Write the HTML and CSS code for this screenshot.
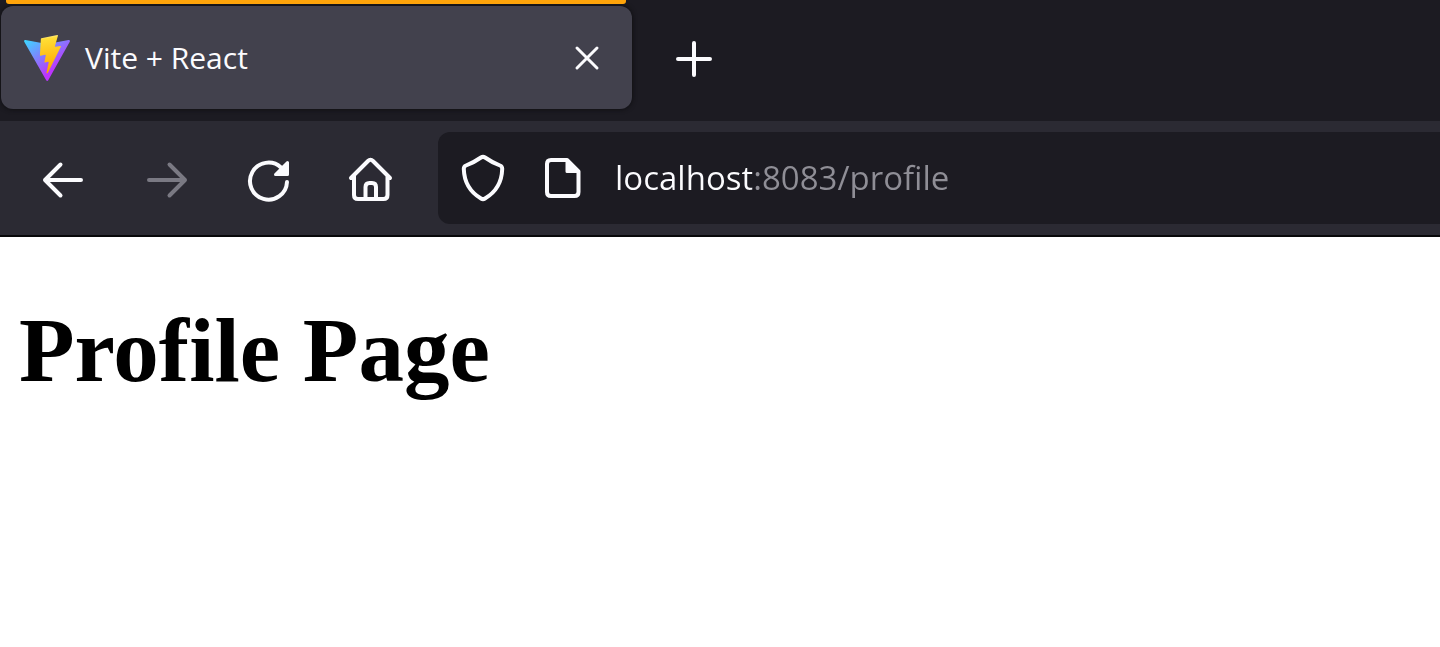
FILE: index.html
```html
<!DOCTYPE html>
<html lang="en">
<head>
<meta charset="utf-8">
<meta name="viewport" content="width=device-width, initial-scale=1">
<title>Vite + React</title>
<link rel="stylesheet" href="styles.css">
</head>
<body>
<header class="browser">
  <div class="tab-strip">
    <div class="tab">
      <svg class="favicon" viewBox="0 0 256 257" aria-hidden="true">
        <defs>
          <linearGradient id="shell" x1="-.828%" x2="57.636%" y1="7.652%" y2="78.411%"><stop offset="0" stop-color="#41d1ff"/><stop offset="1" stop-color="#bd34fe"/></linearGradient>
          <linearGradient id="bolt" x1="43.376%" x2="50.316%" y1="2.242%" y2="89.03%"><stop offset="0" stop-color="#ffea83"/><stop offset=".083" stop-color="#ffdd35"/><stop offset="1" stop-color="#ffa800"/></linearGradient>
        </defs>
        <path fill="url(#shell)" d="M255.153 37.938L134.897 252.976c-2.483 4.44-8.862 4.466-11.382.048L.875 37.958c-2.746-4.814 1.371-10.646 6.827-9.67l120.385 21.517a6.537 6.537 0 0 0 2.322-.004l117.867-21.483c5.438-.991 9.574 4.796 6.877 9.62Z"/>
        <path fill="url(#bolt)" d="M185.432.063L96.44 17.501a3.268 3.268 0 0 0-2.634 3.014l-5.474 92.456a3.268 3.268 0 0 0 3.997 3.378l24.777-5.718c2.318-.535 4.413 1.507 3.936 3.838l-7.361 36.047c-.495 2.426 1.782 4.5 4.151 3.78l15.304-4.649c2.372-.72 4.652 1.36 4.15 3.788l-11.698 56.621c-.732 3.542 3.979 5.473 5.943 2.437l1.313-2.028l72.516-144.72c1.215-2.423-.88-5.186-3.54-4.672l-25.505 4.922c-2.396.462-4.435-1.77-3.759-4.114l16.646-57.705c.677-2.35-1.37-4.583-3.769-4.113Z"/>
      </svg>
      <span class="tab-title">Vite + React</span>
      <button class="icon-button" type="button" aria-label="Close tab">
        <svg class="icon" viewBox="0 0 48 48"><path d="M14 14 34 34M34 14 14 34"/></svg>
      </button>
    </div>
    <button class="icon-button" type="button" aria-label="New tab">
      <svg class="icon" viewBox="0 0 48 48"><path d="M24 9V41M8 25H40"/></svg>
    </button>
  </div>
  <nav class="toolbar" aria-label="Navigation">
    <div class="nav-buttons">
      <button class="icon-button" type="button" aria-label="Back">
        <svg class="icon" viewBox="0 0 48 48"><path d="M41 26H5M20.500 10.500 5 26 20.500 41.500"/></svg>
      </button>
      <button class="icon-button" type="button" aria-label="Forward" disabled>
        <svg class="icon" viewBox="0 0 48 48"><path d="M7 26H43M27.500 10.500 43 26 27.500 41.500"/></svg>
      </button>
      <button class="icon-button" type="button" aria-label="Reload">
        <svg class="icon" viewBox="0 0 48 48"><path d="M43 28A18.500 18.500 0 1 1 37 13.500"/><path class="solid" d="M43.500 8.500V20.500H31.500Z"/></svg>
      </button>
      <button class="icon-button" type="button" aria-label="Home">
        <svg class="icon" viewBox="0 0 48 48"><path d="M5 24 22 7Q24.500 4.500 27 7L44 24M8 22V41Q8 45 12 45H37.500Q41.500 45 41.500 41V22M19.500 45V33Q19.500 29 23.500 29H26Q30 29 30 33V45"/></svg>
      </button>
    </div>
    <div class="address-bar">
      <button class="icon-button" type="button" aria-label="Tracking protection">
        <svg class="icon" viewBox="0 0 48 48"><path d="M22 3.500Q24 2.200 26 3.500C31 7 35 9.200 41 11.500Q43.300 12.500 43.200 15C42.800 29 37 38 26 44.500Q24 45.800 22 44.500C11 38 5.200 29 4.800 15Q4.700 12.500 7 11.500C13 9.200 17 7 22 3.500Z"/></svg>
      </button>
      <button class="icon-button" type="button" aria-label="Site information">
        <svg class="icon" viewBox="0 0 48 48"><path d="M12 6H28L39.500 17.500V38Q39.500 42 35.500 42H12Q8 42 8 38V10Q8 6 12 6Z"/><path class="solid" d="M28 6V17.500H39.500Z"/></svg>
      </button>
      <input class="address" type="text" aria-label="Address" value="localhost:8083/profile" spellcheck="false">
    </div>
  </nav>
</header>
<main class="page">
  <h1 class="page-title">Profile Page</h1>
</main>
</body>
</html>
```

FILE: styles.css
```css
* { box-sizing: border-box; }

body {
  margin: 0;
  background: #fff;
  color: #000;
  font-family: "Liberation Serif", "Times New Roman", serif;
}

.browser {
  color: #fbfbfe;
  background: #1c1b22;
  font-family: "Open Sans", "Noto Sans", sans-serif;
}

.tab-strip {
  display: flex;
  align-items: center;
  gap: 38px;
  padding: 6px 1px 12px;
}

.tab {
  position: relative;
  display: flex;
  flex: 0 1 631px;
  align-items: center;
  gap: 15px;
  padding: 28px 21px 27px 23px;
  border-radius: 12px;
  background: #42414d;
  box-shadow: 0 0 5px #0c0c0e;
}

/* Container colour line above the tab */
.tab::before {
  content: "";
  position: absolute;
  top: -6px;
  left: 5px;
  right: 6px;
  height: 4px;
  border-radius: 0 0 3px 3px;
  background: #ffa40a;
}

.favicon { width: 46px; height: 46px; }

.tab-title {
  flex: 1;
  font-size: 30px;
  line-height: 40px;
}

.icon-button {
  display: block;
  flex: none;
  margin: 0;
  padding: 0;
  border: 0;
  background: none;
  color: inherit;
}

.icon-button:disabled { color: #7a7983; }

.icon {
  display: block;
  width: 48px;
  height: 48px;
  fill: none;
  stroke: currentColor;
  stroke-width: 4;
  stroke-linecap: round;
  stroke-linejoin: round;
}

.tab .icon { stroke-width: 3; }

.icon .solid { fill: currentColor; stroke-width: 3; }

.toolbar {
  display: flex;
  align-items: center;
  gap: 44px;
  padding: 11px 0;
  border-bottom: 2px solid #08080a;
  background: #2b2a33;
}

.nav-buttons {
  display: flex;
  gap: 54px;
  padding-left: 40px;
}

.address-bar {
  display: flex;
  flex: 1;
  align-items: center;
  gap: 28px;
  min-width: 0;
  padding: 20px 0 20px 21px;
  border-radius: 12px 0 0 12px;
  background: #1c1b22;
}

.address-bar .icon-button + .icon-button { margin-left: 4px; }

.address {
  flex: 1;
  min-width: 0;
  height: 52px;
  padding: 0;
  border: 0;
  outline: 0;
  /* Host in white, port and path dimmed */
  background: linear-gradient(90deg, #fbfbfe 137px, #8f8e96 137px);
  background-clip: text;
  -webkit-background-clip: text;
  color: transparent;
  caret-color: #fbfbfe;
  font: 33px/52px "Open Sans", "Noto Sans", sans-serif;
}

.page { padding: 62px 19px; }

.page-title {
  margin: 0;
  font-size: 91px;
  line-height: 104px;
  font-variant-ligatures: none;
}
```
